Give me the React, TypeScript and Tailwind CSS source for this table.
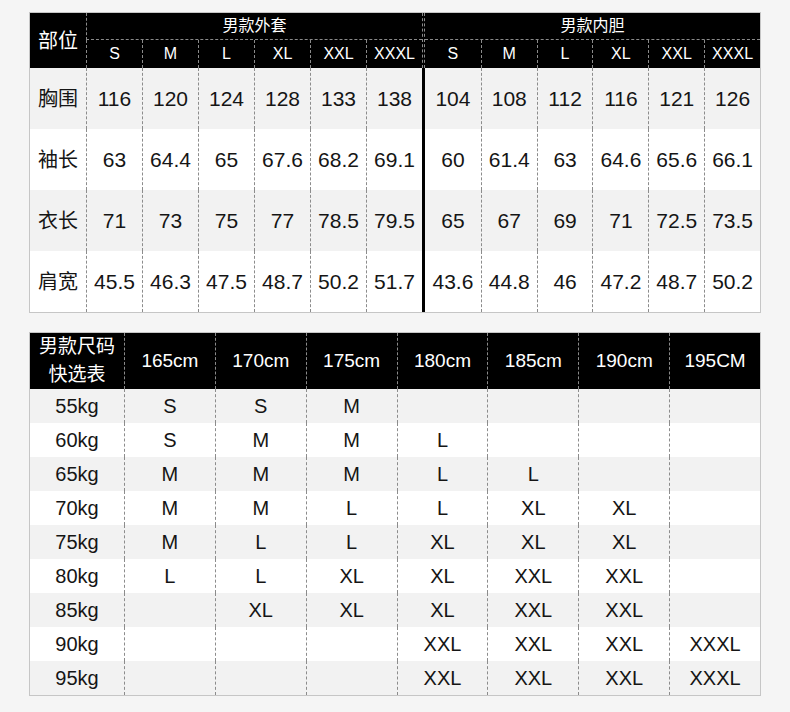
const FONT = "font-['Liberation_Sans','Noto_Sans_CJK_SC',sans-serif]";

const SIZES = ['S', 'M', 'L', 'XL', 'XXL', 'XXXL'];

const MEASURES: { label: string; outer: string[]; inner: string[] }[] = [
  { label: '胸围', outer: ['116', '120', '124', '128', '133', '138'], inner: ['104', '108', '112', '116', '121', '126'] },
  { label: '袖长', outer: ['63', '64.4', '65', '67.6', '68.2', '69.1'], inner: ['60', '61.4', '63', '64.6', '65.6', '66.1'] },
  { label: '衣长', outer: ['71', '73', '75', '77', '78.5', '79.5'], inner: ['65', '67', '69', '71', '72.5', '73.5'] },
  { label: '肩宽', outer: ['45.5', '46.3', '47.5', '48.7', '50.2', '51.7'], inner: ['43.6', '44.8', '46', '47.2', '48.7', '50.2'] },
];

const HEIGHTS = ['165cm', '170cm', '175cm', '180cm', '185cm', '190cm', '195CM'];

const PICKS: { weight: string; sizes: string[] }[] = [
  { weight: '55kg', sizes: ['S', 'S', 'M', '', '', '', ''] },
  { weight: '60kg', sizes: ['S', 'M', 'M', 'L', '', '', ''] },
  { weight: '65kg', sizes: ['M', 'M', 'M', 'L', 'L', '', ''] },
  { weight: '70kg', sizes: ['M', 'M', 'L', 'L', 'XL', 'XL', ''] },
  { weight: '75kg', sizes: ['M', 'L', 'L', 'XL', 'XL', 'XL', ''] },
  { weight: '80kg', sizes: ['L', 'L', 'XL', 'XL', 'XXL', 'XXL', ''] },
  { weight: '85kg', sizes: ['', 'XL', 'XL', 'XL', 'XXL', 'XXL', ''] },
  { weight: '90kg', sizes: ['', '', '', 'XXL', 'XXL', 'XXL', 'XXXL'] },
  { weight: '95kg', sizes: ['', '', '', 'XXL', 'XXL', 'XXL', 'XXXL'] },
];

const topCols = 'grid grid-cols-[56px_repeat(6,56px)_3px_repeat(6,1fr)]';
const bottomCols = 'grid grid-cols-[94px_repeat(7,1fr)]';

function MeasureTable() {
  return (
    <div className="w-[732px] border border-[#c6c6c6]">
      <div className={`${topCols} grid-rows-[27px_28px] bg-black text-white`}>
        <div className="row-span-2 flex items-center justify-center text-[20px]">部位</div>
        <div className="col-span-6 flex items-center justify-center border-b border-l border-dashed border-[#8a8a8a] text-[16px]">
          男款外套
        </div>
        <div className="row-span-2 border-x border-dashed border-[#8a8a8a]" />
        <div className="col-span-6 flex items-center justify-center border-b border-dashed border-[#8a8a8a] text-[16px]">
          男款内胆
        </div>
        {SIZES.map((s) => (
          <div key={`o-${s}`} className="flex items-center justify-center border-l border-dashed border-[#8a8a8a] text-[16px]">
            {s}
          </div>
        ))}
        {SIZES.map((s, i) => (
          <div
            key={`i-${s}`}
            className={`flex items-center justify-center text-[16px] ${i > 0 ? 'border-l border-dashed border-[#8a8a8a]' : ''}`}
          >
            {s}
          </div>
        ))}
      </div>
      {MEASURES.map((row, r) => (
        <div key={row.label} className={`${topCols} h-[61px] text-[21px] text-[#151515] ${r % 2 === 0 ? 'bg-[#f2f2f2]' : 'bg-white'}`}>
          <div className="flex items-center justify-center text-[20px]">{row.label}</div>
          {row.outer.map((v, i) => (
            <div key={i} className="flex items-center justify-center border-l border-dashed border-[#8c8c8c]">
              {v}
            </div>
          ))}
          <div className="bg-black" />
          {row.inner.map((v, i) => (
            <div
              key={i}
              className={`flex items-center justify-center ${i > 0 ? 'border-l border-dashed border-[#8c8c8c]' : ''}`}
            >
              {v}
            </div>
          ))}
        </div>
      ))}
    </div>
  );
}

function PickTable() {
  return (
    <div className="mt-[19px] w-[732px] border border-[#c6c6c6]">
      <div className={`${bottomCols} h-[56px] bg-black text-white`}>
        <div className="flex flex-col items-center justify-center text-[19px] leading-[28px]">
          <span>男款尺码</span>
          <span>快选表</span>
        </div>
        {HEIGHTS.map((h) => (
          <div key={h} className="flex items-center justify-center border-l border-dashed border-[#8a8a8a] text-[19px]">
            {h}
          </div>
        ))}
      </div>
      {PICKS.map((row, r) => (
        <div
          key={row.weight}
          className={`${bottomCols} h-[34px] text-[20px] text-[#151515] ${r % 2 === 0 ? 'bg-[#f2f2f2]' : 'bg-white'}`}
        >
          <div className="flex items-center justify-center">{row.weight}</div>
          {row.sizes.map((s, i) => (
            <div key={i} className="flex items-center justify-center border-l border-dashed border-[#8c8c8c]">
              {s}
            </div>
          ))}
        </div>
      ))}
    </div>
  );
}

export default function App() {
  return (
    <div className={`h-[712px] w-[790px] bg-[#f5f5f5] pl-[29px] pt-[12px] ${FONT}`}>
      <MeasureTable />
      <PickTable />
    </div>
  );
}
